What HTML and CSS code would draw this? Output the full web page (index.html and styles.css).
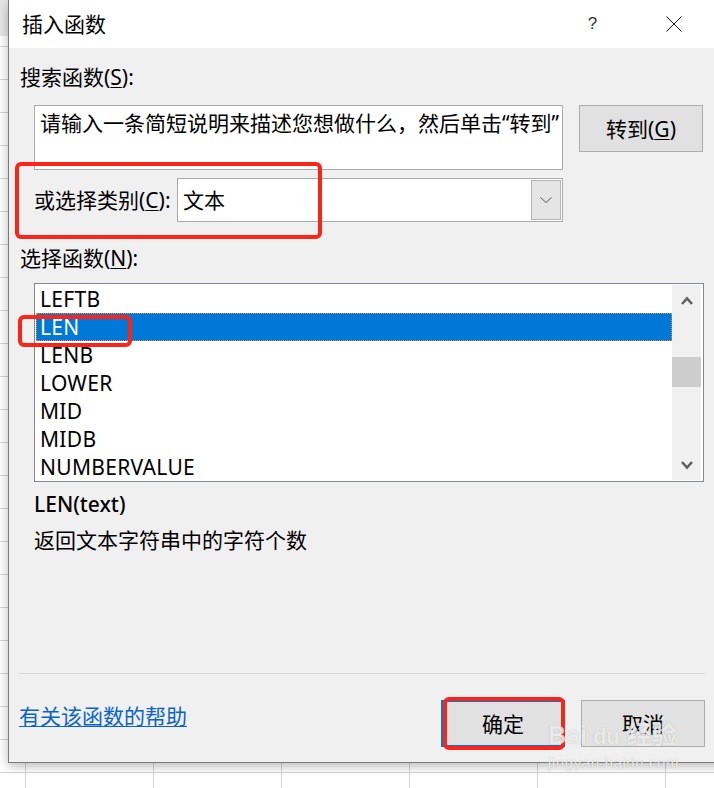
FILE: index.html
```html
<!DOCTYPE html>
<html lang="zh-CN">
<head>
<meta charset="utf-8">
<title>插入函数</title>
<link rel="stylesheet" href="styles.css">
</head>
<body>
<div class="screen">
  <div class="dialog">
    <div class="titlebar">
      <span class="title">插入函数</span>
      <span class="tb-btn help">?</span>
      <span class="tb-btn close"><svg width="16" height="16" viewBox="0 0 16 16"><path d="M0.5 0.5L15.5 15.5M15.5 0.5L0.5 15.5" stroke="#111" stroke-width="1" fill="none"/></svg></span>
    </div>
    <div class="content">
      <div class="label l-search">搜索函数(<u>S</u>):</div>
      <div class="search-row">
        <div class="search-box">请输入一条简短说明来描述您想做什么，然后单击“转到”</div>
        <div class="btn go">转到(<u>G</u>)</div>
      </div>
      <div class="cat-row">
        <span class="cat-label">或选择类别(<u>C</u>):</span>
        <div class="combo">
          <span class="combo-text">文本</span>
          <span class="combo-dd"><svg width="12" height="6" viewBox="0 0 12 6"><path d="M0.5 0.5L6 5.5L11.5 0.5" stroke="#555" stroke-width="1" fill="none"/></svg></span>
        </div>
      </div>
      <div class="label l-func">选择函数(<u>N</u>):</div>
      <div class="listbox">
        <ul class="items">
          <li>LEFTB</li>
          <li class="sel">LEN</li>
          <li>LENB</li>
          <li>LOWER</li>
          <li>MID</li>
          <li>MIDB</li>
          <li>NUMBERVALUE</li>
        </ul>
        <div class="scrollbar">
          <div class="sb-btn"><svg width="12" height="9" viewBox="0 0 12 9"><path d="M1 8L6 2.5L11 8" stroke="#606060" stroke-width="2.6" fill="none"/></svg></div>
          <div class="track"><div class="thumb"></div></div>
          <div class="sb-btn"><svg width="12" height="9" viewBox="0 0 12 9"><path d="M1 1L6 6.5L11 1" stroke="#606060" stroke-width="2.6" fill="none"/></svg></div>
        </div>
      </div>
      <div class="sig">LEN(text)</div>
      <div class="desc">返回文本字符串中的字符个数</div>
      <div class="spacer"></div>
      <div class="sep"></div>
      <div class="footer">
        <a class="help-link">有关该函数的帮助</a>
        <div class="btn ok">确定</div>
        <div class="btn cancel">取消</div>
      </div>
    </div>
  </div>
  <div class="mark mark-cat"></div>
  <div class="mark mark-len"></div>
  <div class="mark mark-ok"></div>
  <div class="watermark">
    <div class="wm-main">Bai<span class="wm-du">du</span> 经验</div>
    <div class="wm-url">jingyan.baidu.com</div>
  </div>
</div>
</body>
</html>
```

FILE: styles.css
```css
* { box-sizing: border-box; }

html, body {
  margin: 0;
  padding: 0;
  width: 714px;
  height: 788px;
  overflow: hidden;
}

body {
  font-family: "Noto Sans", "Noto Sans CJK SC", sans-serif;
  color: #000;
  background-color: #fff;
  background-image:
    linear-gradient(#e6e6e6, #e6e6e6),
    linear-gradient(to right, #d4d4d4 1px, transparent 1px),
    linear-gradient(to bottom, #d4d4d4 1px, transparent 1px);
  background-size: 100% 36px, 128px 100%, 100% 33px;
  background-position: 0 0, 25px 0, 0 13px;
  background-repeat: no-repeat, repeat, repeat;
}

.screen {
  position: relative;
  width: 714px;
  height: 788px;
}

.dialog {
  margin-left: 8px;
  width: 717px;
  height: 763px;
  background: #f0f0f0;
  border-left: 1px solid #7a7a7a;
  border-bottom: 1px solid #7a7a7a;
  box-shadow: 0 3px 10px rgba(0, 0, 0, 0.28);
  display: flex;
  flex-direction: column;
}

.titlebar {
  height: 48px;
  background: #fff;
  display: flex;
  align-items: center;
  padding-left: 13px;
  padding-right: 31px;
  flex-shrink: 0;
}

.title {
  font-size: 21px;
  flex: 1;
  line-height: 28px;
  margin-top: -1px;
}

.tb-btn {
  width: 40px;
  display: flex;
  justify-content: center;
  align-items: center;
}

.help {
  font-family: "Liberation Sans", sans-serif;
  font-size: 17px;
  color: #333;
  margin-right: 40px;
  padding-right: 3px;
}

.close svg { display: block; }

.content {
  flex: 1;
  display: flex;
  flex-direction: column;
  padding: 15px 20px 15px 11px;
}

.label {
  font-size: 21px;
  line-height: 28px;
}

u { text-decoration-thickness: 1px; text-underline-offset: 2px; }

.search-row {
  display: flex;
  align-items: flex-start;
  gap: 16px;
  margin-top: 14px;
  margin-left: 14px;
}

.search-box {
  width: 529px;
  height: 65px;
  background: #fff;
  border: 1px solid #ababab;
  padding: 3px 0 0 5px;
  font-size: 21px;
  line-height: 28px;
  white-space: nowrap;
  overflow: hidden;
}

.btn {
  background: #e1e1e1;
  border: 1px solid #adadad;
  display: flex;
  align-items: center;
  justify-content: center;
  font-size: 21px;
  line-height: 28px;
}

.go {
  width: 124px;
  height: 47px;
}

.cat-row {
  display: flex;
  align-items: center;
  margin-top: 8px;
  margin-left: 14px;
}

.cat-label {
  width: 143px;
  flex-shrink: 0;
  font-size: 21px;
  line-height: 28px;
  white-space: nowrap;
}

.combo {
  width: 386px;
  height: 44px;
  background: #fff;
  border: 1px solid #ababab;
  padding: 1px;
  display: flex;
  align-items: stretch;
}

.combo-text {
  flex: 1;
  font-size: 21px;
  line-height: 28px;
  padding-left: 4px;
  display: flex;
  align-items: center;
}

.combo-dd {
  width: 30px;
  background: #e5e5e5;
  border: 1px solid #b4b4b4;
  display: flex;
  align-items: center;
  justify-content: center;
}

.combo-dd svg { display: block; }

.l-func { margin-top: 22px; }

.listbox {
  margin-top: 11px;
  margin-left: 14px;
  width: 670px;
  height: 199px;
  background: #fff;
  border: 1px solid #828790;
  padding: 1px 2px 1px 1px;
  display: flex;
}

.items {
  list-style: none;
  margin: 0;
  padding: 0;
  flex: 1;
}

.items li {
  height: 28px;
  line-height: 28px;
  padding-left: 4px;
  font-size: 21px;
  letter-spacing: 0.3px;
}

.items li.sel {
  background: #0078d7;
  color: #fff;
  outline: 1px dotted #d8903a;
  outline-offset: -1px;
}

.scrollbar {
  width: 29px;
  background: #f0f0f0;
  display: flex;
  flex-direction: column;
}

.sb-btn {
  height: 30px;
  display: flex;
  align-items: center;
  justify-content: center;
}

.sb-btn svg { display: block; }

.track { flex: 1; }

.thumb {
  margin-top: 42px;
  height: 30px;
  background: #cdcdcd;
}

.sig {
  margin-top: 8px;
  margin-left: 14px;
  font-size: 21px;
  line-height: 28px;
  font-weight: 500;
}

.desc {
  margin-top: 8px;
  margin-left: 14px;
  font-size: 21px;
  line-height: 28px;
}

.spacer { flex: 1; }

.sep {
  height: 1px;
  background: #d9d9d9;
  margin-left: -1px;
}

.footer {
  display: flex;
  align-items: flex-start;
  margin-top: 26px;
}

.help-link {
  flex: 1;
  margin-top: 2px;
  color: #0a64c8;
  font-size: 21px;
  line-height: 28px;
  text-decoration: underline;
  text-decoration-thickness: 1px;
  text-underline-offset: 2px;
  margin-left: -1px;
}

.ok {
  width: 124px;
  height: 47px;
  border: 2px solid #0078d7;
  margin-right: 16px;
}

.cancel {
  width: 124px;
  height: 47px;
}

.mark {
  position: absolute;
  border: 4px solid #fa2518;
  border-radius: 6px;
}

.mark-cat { left: 15px; top: 162px; width: 307px; height: 77px; }
.mark-len { left: 18px; top: 315px; width: 114px; height: 32px; }
.mark-ok  { left: 443px; top: 697px; width: 122px; height: 53px; }

.watermark {
  position: absolute;
  left: 548px;
  top: 718px;
  color: rgba(255, 255, 255, 0.75);
  text-shadow: 0 0 1px rgba(120, 120, 120, 0.55);
  pointer-events: none;
}

.wm-main {
  font-family: "Liberation Sans", "Noto Sans CJK SC", sans-serif;
  font-weight: bold;
  font-size: 25px;
  line-height: 34px;
  white-space: nowrap;
}

.wm-du { font-size: 22px; margin-left: 6px; }

.wm-url {
  font-family: "Liberation Sans", sans-serif;
  font-size: 15px;
  line-height: 18px;
  letter-spacing: 0.6px;
}
```
